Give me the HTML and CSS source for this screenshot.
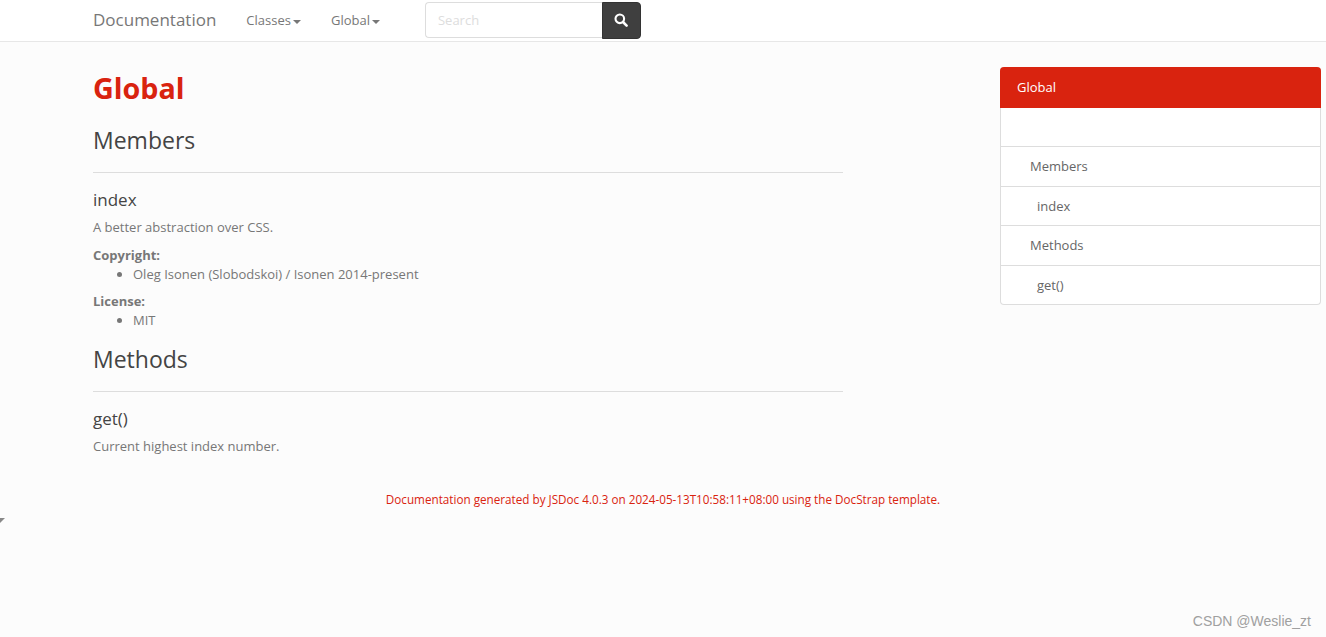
FILE: index.html
```html
<!DOCTYPE html>
<html>
<head>
    <meta charset="UTF-8">
    <title>Documentation Global</title>
    <link rel="stylesheet" href="styles.css">
</head>
<body>
    <nav class="navbar">
        <a class="brand" href="#">Documentation</a>
        <a class="nav-link" href="#">Classes<span class="caret"></span></a>
        <a class="nav-link" href="#">Global<span class="caret"></span></a>
        <form class="search">
            <input type="text" placeholder="Search">
            <button type="button" aria-label="Search">
                <svg width="14" height="14" viewBox="0 0 14 14"><circle cx="5.8" cy="5.8" r="4.3" fill="none" stroke="#fff" stroke-width="2.1"/><path d="M9 9l3.6 3.6" stroke="#fff" stroke-width="2.6" stroke-linecap="round"/></svg>
            </button>
        </form>
    </nav>

    <div class="page">
        <main class="content">
            <h1>Global</h1>

            <h2>Members</h2>
            <hr>
            <h4>index</h4>
            <p>A better abstraction over CSS.</p>
            <dl>
                <dt>Copyright:</dt>
                <dd><ul><li>Oleg Isonen (Slobodskoi) / Isonen 2014-present</li></ul></dd>
                <dt>License:</dt>
                <dd><ul><li>MIT</li></ul></dd>
            </dl>

            <h2>Methods</h2>
            <hr>
            <h4>get()</h4>
            <p>Current highest index number.</p>
        </main>

        <aside class="toc">
            <div class="toc-title">Global</div>
            <div class="toc-row"></div>
            <div class="toc-row level-1">Members</div>
            <div class="toc-row level-2">index</div>
            <div class="toc-row level-1">Methods</div>
            <div class="toc-row level-2">get()</div>
        </aside>
    </div>

    <footer class="footer">Documentation generated by JSDoc 4.0.3 on 2024-05-13T10:58:11+08:00 using the DocStrap template.</footer>

    <div class="corner-mark"></div>
    <div class="watermark">CSDN @Weslie_zt</div>
</body>
</html>
```

FILE: styles.css
```css
body {
    margin: 0;
    height: 637px;
    overflow: hidden;
    background: #fcfcfc;
    color: #777;
    font-family: "Open Sans", sans-serif;
    font-size: 13px;
    line-height: 19px;
}
a {
    color: inherit;
    text-decoration: none;
}
.navbar {
    display: flex;
    align-items: center;
    height: 41px;
    padding-left: 93px;
    background: #fff;
    border-bottom: 1px solid #e7e7e7;
}
.brand {
    padding-bottom: 2px;
    font-size: 17px;
    margin-right: 30px;
}
.nav-link {
    margin-right: 30px;
    font-size: 13px;
}
.caret {
    display: inline-block;
    margin-left: 2px;
    vertical-align: middle;
    border-top: 4px solid #777;
    border-left: 4px solid transparent;
    border-right: 4px solid transparent;
}
.search {
    display: flex;
    margin-left: 15px;
    height: 37px;
    align-items: flex-start;
}
.search input {
    box-sizing: border-box;
    width: 177px;
    height: 36px;
    padding: 0 12px 0;
    border: 1px solid #ddd;
    border-right: none;
    border-radius: 4px 0 0 4px;
    background: #fff;
    font-family: inherit;
    font-size: 13px;
}
.search input::placeholder {
    color: #ddd;
}
.search button {
    display: flex;
    align-items: center;
    justify-content: center;
    box-sizing: border-box;
    width: 39px;
    height: 37px;
    padding: 0 0 2px;
    background: #3f3f3f;
    border: 1px solid #333;
    border-radius: 0 4px 4px 0;
}
.page {
    display: flex;
    align-items: flex-start;
    padding-left: 93px;
}
.content {
    width: 750px;
}
h1 {
    margin: 27px 0 0;
    padding-bottom: 4px;
    color: #d9230f;
    font-size: 28.7px;
    font-weight: 700;
    line-height: 38px;
}
h2 {
    margin: 13px 0 0;
    color: #444;
    font-size: 23px;
    font-weight: 400;
    line-height: 32px;
}
hr {
    margin: 16px 0 0;
    border: none;
    border-top: 1px solid #ddd;
}
h4 {
    margin: 17px 0 0;
    color: #444;
    font-size: 17px;
    font-weight: 400;
    line-height: 20px;
}
p {
    margin: 8px 0 0;
}
dl {
    margin: 9px 0 0;
}
dt {
    font-weight: 700;
}
dd {
    margin: 0 0 8px;
}
ul {
    margin: 0;
    padding-left: 40px;
}
.toc {
    box-sizing: border-box;
    width: 321px;
    margin: 25px 0 0 157px;
    background: #fff;
    border: 1px solid #ddd;
    border-top: none;
    border-radius: 4px;
    color: #666;
}
.toc-title {
    margin: 0 -1px;
    padding: 11px 17px;
    background: #d9230f;
    color: #fff;
    border-radius: 4px 4px 0 0;
}
.toc-row {
    box-sizing: border-box;
    height: 39.4px;
    padding-top: 9.5px;
    border-bottom: 1px solid #ddd;
}
.toc-row:last-child {
    height: 38.4px;
    border-bottom: none;
}
.level-1 {
    padding-left: 29px;
}
.level-2 {
    padding-top: 10px;
    padding-left: 36px;
}
.footer {
    margin-top: 34px;
    text-align: center;
    color: #d9230f;
    font-size: 11.7px;
}
.corner-mark {
    position: absolute;
    left: 0;
    top: 518px;
    border-top: 5px solid #888;
    border-right: 5px solid transparent;
}
.watermark {
    position: absolute;
    right: 15px;
    top: 612px;
    color: #a0a0a0;
    font-family: "Liberation Sans", sans-serif;
    font-size: 14px;
}
```
